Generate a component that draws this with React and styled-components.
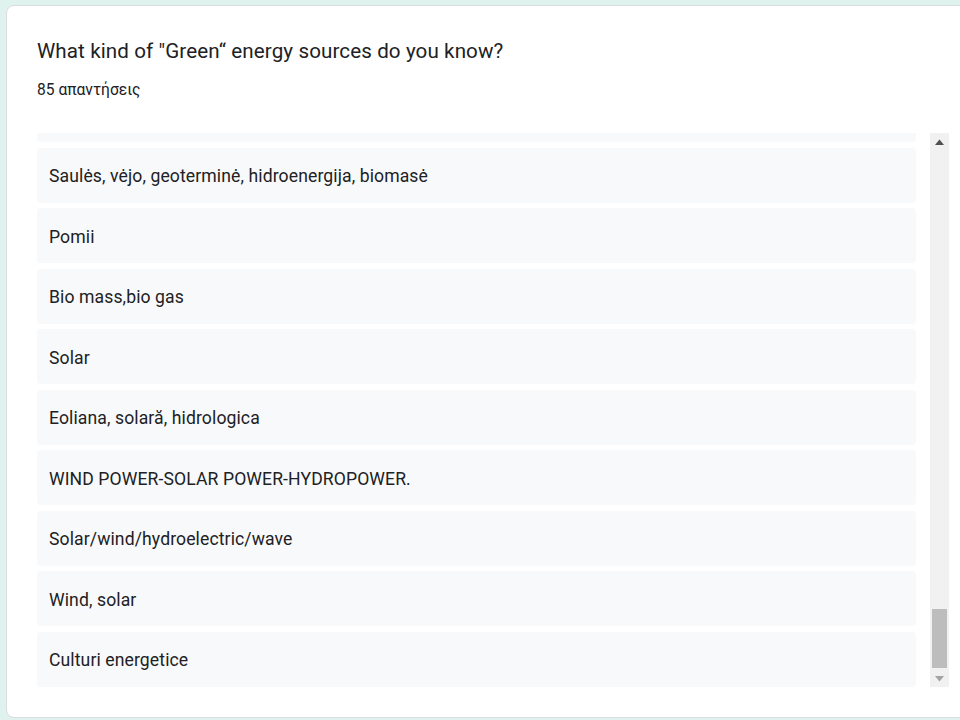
import React from 'react';
import styled, { createGlobalStyle } from 'styled-components';

// the first entry is scrolled almost out of view; only its bottom edge shows
const answers = [
  '',
  'Saulės, vėjo, geoterminė, hidroenergija, biomasė',
  'Pomii',
  'Bio mass,bio gas',
  'Solar',
  'Eoliana, solară, hidrologica',
  'WIND POWER-SOLAR POWER-HYDROPOWER.',
  'Solar/wind/hydroelectric/wave',
  'Wind, solar',
  'Culturi energetice',
];

const GlobalStyle = createGlobalStyle`
  html, body {
    margin: 0;
    padding: 0;
    background: #e0f2ee;
    overflow: hidden;
  }
  body {
    font-family: Roboto, "Liberation Sans", sans-serif;
    color: #202124;
  }
`;

const Page = styled.div`
  width: 960px;
  height: 720px;
  padding: 5px 0 0 6px;
  box-sizing: border-box;
  overflow: hidden;
`;

const Card = styled.div`
  width: 990px;
  height: 713px;
  box-sizing: border-box;
  background: #fff;
  border: 1px solid #dadce0;
  border-radius: 8px;
  padding: 0 0 0 30px;
  display: flex;
  flex-direction: column;
`;

const Header = styled.div`
  padding-top: 33px;
  height: 127px;
  box-sizing: border-box;
`;

const Title = styled.h2`
  margin: 0;
  font-family: Roboto, "Liberation Sans", sans-serif;
  font-size: 20.6px;
  font-weight: 400;
  line-height: 24px;
  letter-spacing: 0.1px;
`;

const Count = styled.div`
  margin-top: 17px;
  font-size: 15.6px;
  line-height: 20px;
`;

const ListFrame = styled.div`
  display: flex;
  width: 912px;
  height: 554px;
`;

const Viewport = styled.div`
  flex: 1;
  overflow: hidden;
`;

const List = styled.div`
  display: flex;
  flex-direction: column;
  gap: 5.5px;
  margin-top: -46px;
`;

const Item = styled.div`
  height: 55px;
  flex-shrink: 0;
  box-sizing: border-box;
  background: #f8f9fa;
  border-radius: 4px;
  padding: 2px 12px 0;
  display: flex;
  align-items: center;
  font-size: 17.6px;
  letter-spacing: 0.1px;
`;

const Track = styled.div`
  width: 19px;
  margin-left: 14px;
  background: #f1f1f1;
  display: flex;
  flex-direction: column;
`;

const Arrow = styled.div`
  height: 17px;
  display: flex;
  align-items: center;
  justify-content: center;
`;

const Spacer = styled.div`
  flex: 1;
`;

const Thumb = styled.div`
  height: 59px;
  margin: 0 2px 2px;
  background: #bdbdbd;
`;

const Triangle = ({ down }) => (
  <svg width="9" height="6" viewBox="0 0 9 6">
    <path d={down ? 'M0 0 H9 L4.5 5.5 Z' : 'M0 6 H9 L4.5 0.5 Z'} fill={down ? '#a3a3a3' : '#505050'} />
  </svg>
);

export default function App() {
  return (
    <Page>
      <GlobalStyle />
      <Card>
        <Header>
          <Title>What kind of "Green“ energy sources do you know?</Title>
          <Count>85 απαντήσεις</Count>
        </Header>
        <ListFrame>
          <Viewport>
            <List>
              {answers.map((a, i) => (
                <Item key={i}>{a}</Item>
              ))}
            </List>
          </Viewport>
          <Track>
            <Arrow>
              <Triangle />
            </Arrow>
            <Spacer />
            <Thumb />
            <Arrow>
              <Triangle down />
            </Arrow>
          </Track>
        </ListFrame>
      </Card>
    </Page>
  );
}
